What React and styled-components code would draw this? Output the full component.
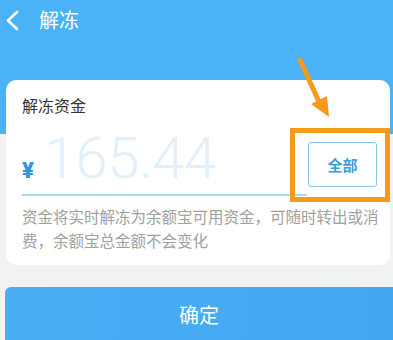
import styled, { createGlobalStyle } from "styled-components";

const GlobalStyle = createGlobalStyle`
  html, body {
    margin: 0;
    padding: 0;
  }
  body {
    font-family: "Noto Sans", "Noto Sans CJK SC", sans-serif;
  }
`;

export default function App() {
  return (
    <Page>
      <GlobalStyle />
      <TopBar>
        <BackIcon viewBox="0 0 24 40" aria-hidden="true">
          <polyline points="14,12 5,20.5 14,29" />
        </BackIcon>
        <PageTitle>解冻</PageTitle>
      </TopBar>

      <Card>
        <CardTitle>解冻资金</CardTitle>
        <AmountRow>
          <InputArea>
            <Yen>¥</Yen>
            <Amount>165.44</Amount>
          </InputArea>
          <AllButton>全部</AllButton>
        </AmountRow>
        <Desc>
          资金将实时解冻为余额宝可用资金，可随时转出或消
          <br />
          费，余额宝总金额不会变化
        </Desc>

        <Highlight />
        <Arrow viewBox="0 0 50 72" aria-hidden="true">
          <line x1="10" y1="10" x2="30" y2="54" />
          <polygon points="39,67 21,54 37,46" />
        </Arrow>
      </Card>

      <ConfirmButton>确定</ConfirmButton>
    </Page>
  );
}

const Page = styled.div`
  width: 393px;
  height: 340px;
  overflow: hidden;
  background: linear-gradient(#4ab3f8 0, #4ab3f8 134px, #f2f2f2 134px);
`;

const TopBar = styled.div`
  display: flex;
  align-items: center;
  height: 40px;
  padding-left: 3px;
`;

const BackIcon = styled.svg`
  width: 24px;
  height: 40px;
  polyline {
    fill: none;
    stroke: #ffffff;
    stroke-width: 2.6;
    stroke-linecap: round;
    stroke-linejoin: round;
  }
`;

const PageTitle = styled.div`
  margin-left: 12px;
  font-family: "Noto Sans CJK SC", sans-serif;
  font-size: 20px;
  line-height: 28px;
  color: #ffffff;
`;

const Card = styled.div`
  position: relative;
  margin: 40px 3px 0 6px;
  padding: 13px 13px 13px 16px;
  background: #ffffff;
  border-radius: 10px;
`;

const CardTitle = styled.div`
  font-family: "Noto Sans CJK SC", sans-serif;
  font-size: 16px;
  line-height: 24px;
  color: #333333;
`;

const AmountRow = styled.div`
  display: flex;
  align-items: flex-end;
`;

const InputArea = styled.div`
  flex: 1;
  display: flex;
  align-items: baseline;
  height: 79px;
  box-sizing: border-box;
  padding-top: 12px;
  border-bottom: 2px solid #a8dbf0;
`;

const Yen = styled.span`
  font-family: Roboto, sans-serif;
  font-weight: 900;
  font-size: 22px;
  color: #2f96e0;
  margin-right: 10px;
`;

const Amount = styled.span`
  font-family: Roboto, sans-serif;
  font-weight: 300;
  font-size: 58px;
  line-height: 1;
  letter-spacing: -0.5px;
  color: #e1f0fc;
`;

const AllButton = styled.button`
  width: 69px;
  height: 45px;
  margin: 0 0 9px 1px;
  padding: 0;
  background: #ffffff;
  border: 1.5px solid #85c8ec;
  border-radius: 3px;
  font-family: "Noto Sans CJK SC", sans-serif;
  font-weight: 700;
  font-size: 15px;
  color: #3a9de0;
`;

const Desc = styled.div`
  margin-top: 8px;
  white-space: nowrap;
  font-family: "Noto Sans CJK SC", sans-serif;
  font-size: 15.5px;
  line-height: 24px;
  letter-spacing: 0;
  color: #a0a0a0;
`;

const Highlight = styled.div`
  position: absolute;
  left: 284px;
  top: 48px;
  width: 100px;
  height: 74px;
  box-sizing: border-box;
  border: 5px solid #f59a1b;
`;

const Arrow = styled.svg`
  position: absolute;
  left: 284px;
  top: -30px;
  width: 50px;
  height: 72px;
  line {
    stroke: #f59a1b;
    stroke-width: 5;
    stroke-linecap: round;
  }
  polygon {
    fill: #f59a1b;
  }
`;

const ConfirmButton = styled.button`
  display: block;
  width: 388px;
  height: 54px;
  margin: 22px 0 0 5px;
  padding: 0;
  border: none;
  border-radius: 6px 0 0 0;
  background: linear-gradient(90deg, #4aaef4, #42a8f1);
  font-family: "Noto Sans CJK SC", sans-serif;
  font-size: 20px;
  color: #ffffff;
`;
